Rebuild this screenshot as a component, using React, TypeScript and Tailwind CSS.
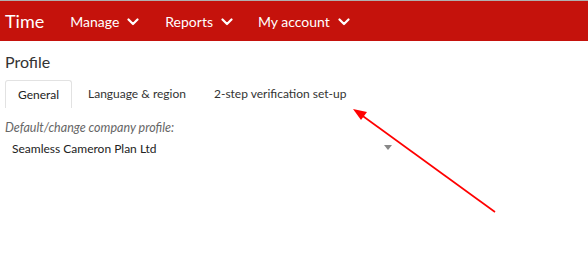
import React from "react";

const Chevron = () => (
  <svg width="12" height="8" viewBox="0 0 12 8" className="ml-[8px] mt-[1px]">
    <path d="M1.5 1.5 L6 6 L10.5 1.5" stroke="white" strokeWidth="2.2" fill="none" strokeLinecap="round" strokeLinejoin="round" />
  </svg>
);

export default function App() {
  return (
    <div className="relative w-[588px] h-[253px] bg-white overflow-hidden" style={{ fontFamily: "Lato, 'Open Sans', sans-serif" }}>
      <div className="h-[41px] bg-[#c5120c] flex items-center text-white border-t border-[#b0b0b0]">
        <div className="pl-[5px] text-[18px] leading-none mr-[26px] mb-[1px]">Time</div>
        <div className="flex items-center text-[14px] mr-[26px]">Manage<Chevron /></div>
        <div className="flex items-center text-[14px] mr-[25px]">Reports<Chevron /></div>
        <div className="flex items-center text-[14px]">My account<Chevron /></div>
      </div>
      <div className="px-[5px]">
        <div className="text-[16px] text-[#333] mt-[11px] leading-[20px]">Profile</div>
        <div className="flex mt-[8px] h-[28px]">
          <div className="border border-b-0 border-[#e2e2e2] rounded-t-[3px] px-[12px] text-[12px] text-[#222] flex items-center h-[28px] w-[67px] justify-center">General</div>
          <div className="ml-[16px] text-[12px] text-[#333] flex items-center">Language &amp; region</div>
          <div className="ml-[28px] text-[12px] text-[#333] flex items-center">2-step verification set-up</div>
        </div>
        <div className="mt-[13px] text-[12.5px] italic text-[#666] leading-[14px]">Default/change company profile:</div>
        <div className="flex items-center w-[387px] mt-[7px]">
          <div className="pl-[7px] text-[12px] text-[#222] flex-1 leading-[14px]">Seamless Cameron Plan Ltd</div>
          <div className="w-0 h-0 border-l-[4px] border-r-[4px] border-t-[5px] border-l-transparent border-r-transparent border-t-[#888] mb-[4px]" />
        </div>
      </div>
      <svg className="absolute left-0 top-0" width="588" height="253" viewBox="0 0 588 253">
        <line x1="495" y1="212" x2="360" y2="114" stroke="#ff0000" strokeWidth="1.6" />
        <polygon points="353,109 367,112 361,120" fill="#ff0000" />
      </svg>
    </div>
  );
}
